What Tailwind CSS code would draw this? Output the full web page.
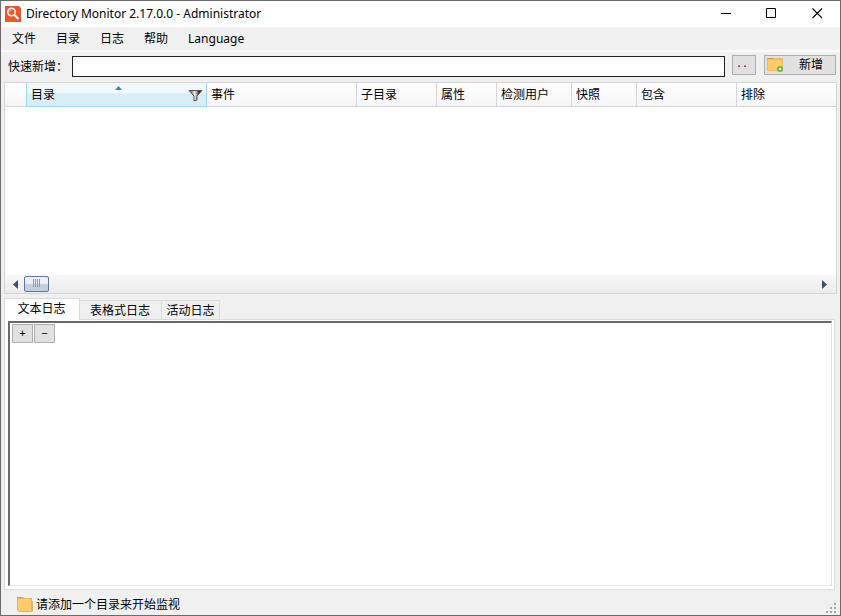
<!DOCTYPE html>
<html lang="zh-CN">
<head>
<meta charset="utf-8">
<title>Directory Monitor</title>
<script src="https://cdn.jsdelivr.net/npm/@tailwindcss/browser@4"></script>
</head>
<body class="flex h-screen flex-col overflow-hidden border border-[#6b6b6b] bg-[#f0f0f0] font-['Liberation_Sans','Noto_Sans_CJK_SC',sans-serif] text-[12px] leading-4 text-black">

<header class="flex h-[26px] shrink-0 items-center bg-white pl-1">
  <svg class="-mt-px size-4 shrink-0" viewBox="0 0 16 16" aria-hidden="true">
    <path d="M0 0H14L16 2V16H0Z" fill="#e8582c"/>
    <circle cx="6.500" cy="6" r="3.800" fill="#e8582c" stroke="#fff" stroke-width="1.500"/>
    <path d="M4.500 6A2 2 0 0 1 6.500 4" fill="none" stroke="#f6b8a2"/>
    <path d="M9.200 8.700L13.500 13" stroke="#fff" stroke-width="2"/>
  </svg>
  <h1 class="ml-[5px] flex-1 font-['Noto_Sans',sans-serif] text-[12px]">Directory Monitor 2.17.0.0 - Administrator</h1>
  <button class="flex h-full w-[46px] items-center justify-center" aria-label="最小化">
    <svg class="-mt-px size-[11px]" viewBox="0 0 11 11"><path d="M0 5.500H10" stroke="#000"/></svg>
  </button>
  <button class="flex h-full w-[45px] items-center justify-center" aria-label="最大化">
    <svg class="-mt-px size-[11px]" viewBox="0 0 11 11"><path d="M.5 .5H9.500V9.500H.5Z" fill="none" stroke="#000"/></svg>
  </button>
  <button class="flex h-full w-[46px] items-center justify-center" aria-label="关闭">
    <svg class="-mt-px size-[11px]" viewBox="0 0 11 11"><path d="M.5 .5L10 10M10 .5L.5 10" stroke="#000" stroke-width="1.1"/></svg>
  </button>
</header>

<nav class="flex h-[25px] shrink-0 items-center gap-5 border-b-2 border-[#fbfbfb] pl-[11px] font-['Noto_Sans','Noto_Sans_CJK_SC',sans-serif]">
  <button>文件</button>
  <button>目录</button>
  <button>日志</button>
  <button>帮助</button>
  <button>Language</button>
</nav>

<form class="flex shrink-0 items-start px-1 pt-[2px] pb-[5px]">
  <label for="quick" class="mt-[5px] ml-[3px] w-16 shrink-0 whitespace-nowrap">快速新增：</label>
  <input id="quick" type="text" class="mt-[2px] h-[21px] min-w-0 flex-1 border border-[#222] bg-white px-1 outline-none">
  <button type="button" class="mt-px ml-[7px] flex h-5 w-6 items-center justify-center border border-[#adadad] bg-[#e1e1e1] pr-1 font-['Liberation_Mono',monospace] text-[10px]">..</button>
  <button type="button" class="mt-px ml-2 flex h-5 w-[72px] items-center justify-between border border-[#adadad] bg-[#e1e1e1] pr-3 pl-[2px]">
    <svg class="size-4" viewBox="0 0 16 16" aria-hidden="true">
      <path d="M0 1H16V14H0Z" fill="#eebc5c"/>
      <path d="M0 1H6V2H0Z" fill="#c99b48"/>
      <path d="M1 3H15V13H1Z" fill="#ffcc69"/>
      <circle cx="13" cy="12" r="3" fill="#69b345"/>
      <circle cx="13" cy="12" r="1.200" fill="#eaf5e2"/>
    </svg>
    <span>新增</span>
  </button>
</form>

<section class="mx-[3px] flex h-[212px] shrink-0 flex-col border border-[#d5d5d5] bg-white">
  <table class="w-full table-fixed border-separate border-spacing-0 text-left">
    <thead>
      <tr class="h-6 bg-linear-to-b from-white to-[#f4f5f7] *:border-r *:border-b *:border-[#d5d5d5] *:p-0 *:pl-1 *:font-normal">
        <th class="w-[22px] border-r-[#96d9f9]!"></th>
        <th class="w-[180px] border-[#96d9f9]! bg-linear-to-b from-[#f2f9fd] from-40% to-[#d9edf7] to-50%">
          <div class="relative flex items-center justify-between pr-[3px]">目录
            <svg class="absolute -top-px left-[84px] h-1 w-[7px]" viewBox="0 0 7 4" aria-hidden="true"><path d="M0 4L3.500 0L7 4Z" fill="#4687a8"/></svg>
            <svg class="mt-px h-[13px] w-[15px]" viewBox="0 0 15 13" aria-hidden="true">
              <defs><linearGradient id="metal"><stop offset=".2" stop-color="#888"/><stop offset=".45" stop-color="#f4f4f4"/><stop offset=".75" stop-color="#333"/></linearGradient></defs>
              <path d="M1 1.500H14L9 7V11L6 12V7Z" fill="url(#metal)" stroke="#555"/>
            </svg>
          </div>
        </th>
        <th class="w-[150px]">事件</th>
        <th class="w-[80px]">子目录</th>
        <th class="w-[60px]">属性</th>
        <th class="w-[75px]">检测用户</th>
        <th class="w-[65px]">快照</th>
        <th class="w-[100px]">包含</th>
        <th class="border-r-0!">排除</th>
      </tr>
    </thead>
  </table>
  <div class="mt-auto flex h-[18px] items-center bg-linear-to-b from-[#f8f8f8] to-[#ececec] px-2">
    <button aria-label="向左滚动"><svg class="h-[9px] w-[6px]" viewBox="0 0 6 9"><path d="M5 0V9L0 4.500Z" fill="#3d4c70"/></svg></button>
    <button aria-label="水平滚动条" class="ml-[5px] flex h-4 w-[25px] justify-center rounded-[2px] border border-[#5c76a5] bg-linear-to-b from-[#edf1f7] from-45% to-[#c3cedf] to-55% pt-[2px]">
      <svg class="h-2 w-2" viewBox="0 0 8 8"><path d="M.5 0V8M2.500 0V8M4.500 0V8M6.500 0V8" stroke="#8f98a9"/></svg>
    </button>
    <button class="ml-auto" aria-label="向右滚动"><svg class="h-[9px] w-[6px]" viewBox="0 0 6 9"><path d="M0 0V9L5 4.500Z" fill="#3d4c70"/></svg></button>
  </div>
</section>

<main class="mt-1 mr-[5px] ml-[3px] flex min-h-0 flex-1 flex-col">
  <div role="tablist" class="flex items-end">
    <button role="tab" aria-selected="true" class="relative z-10 -mb-px flex h-[22px] w-[76px] justify-center border border-b-0 border-[#dcdcdc] bg-white pt-[2px] pr-px">文本日志</button>
    <button role="tab" class="flex h-[19px] w-[82px] items-center justify-center border border-b-0 border-l-0 border-[#dcdcdc] pt-px pr-px">表格式日志</button>
    <button role="tab" class="flex h-[19px] w-[58px] items-center justify-center border border-b-0 border-l-0 border-[#dcdcdc] pt-px">活动日志</button>
  </div>
  <div role="tabpanel" class="flex min-h-0 flex-1 flex-col border border-[#dcdcdc] bg-white pt-px pr-[2px] pb-[3px] pl-[3px]">
    <div class="flex flex-1 items-start gap-px border-t-2 border-r border-b border-l-2 border-t-[#696969] border-r-[#e3e3e3] border-b-[#e3e3e3] border-l-[#696969] pt-px pl-[2px]">
      <button class="flex h-[19px] w-[21px] items-center justify-center border border-[#adadad] bg-[#e1e1e1] pb-px text-[11px]">+</button>
      <button class="flex h-[19px] w-[21px] items-center justify-center border border-[#adadad] bg-[#e1e1e1] pb-px text-[11px]">−</button>
    </div>
  </div>
</main>

<footer class="flex h-[25px] shrink-0 items-center pr-[3px] pl-4">
  <svg class="mt-1 size-4" viewBox="0 0 16 16" aria-hidden="true">
    <path d="M0 0H6L7 1H15V4H16V14L15 15H2L0 13Z" fill="#e2b45c"/>
    <path d="M0 0H5V1H0Z" fill="#c99b48"/>
    <path d="M1 2H14V14H2L1 13Z" fill="#ffcc69"/>
  </svg>
  <span class="mt-1 ml-[3px]">请添加一个目录来开始监视</span>
  <svg class="mt-3 ml-auto size-[11px]" viewBox="0 0 11 11" aria-hidden="true"><path d="M8 0h2v2h-2zM4 4h2v2h-2zM8 4h2v2h-2zM0 8h2v2h-2zM4 8h2v2h-2zM8 8h2v2h-2z" fill="#a5a5a5"/></svg>
</footer>
</body>
</html>
